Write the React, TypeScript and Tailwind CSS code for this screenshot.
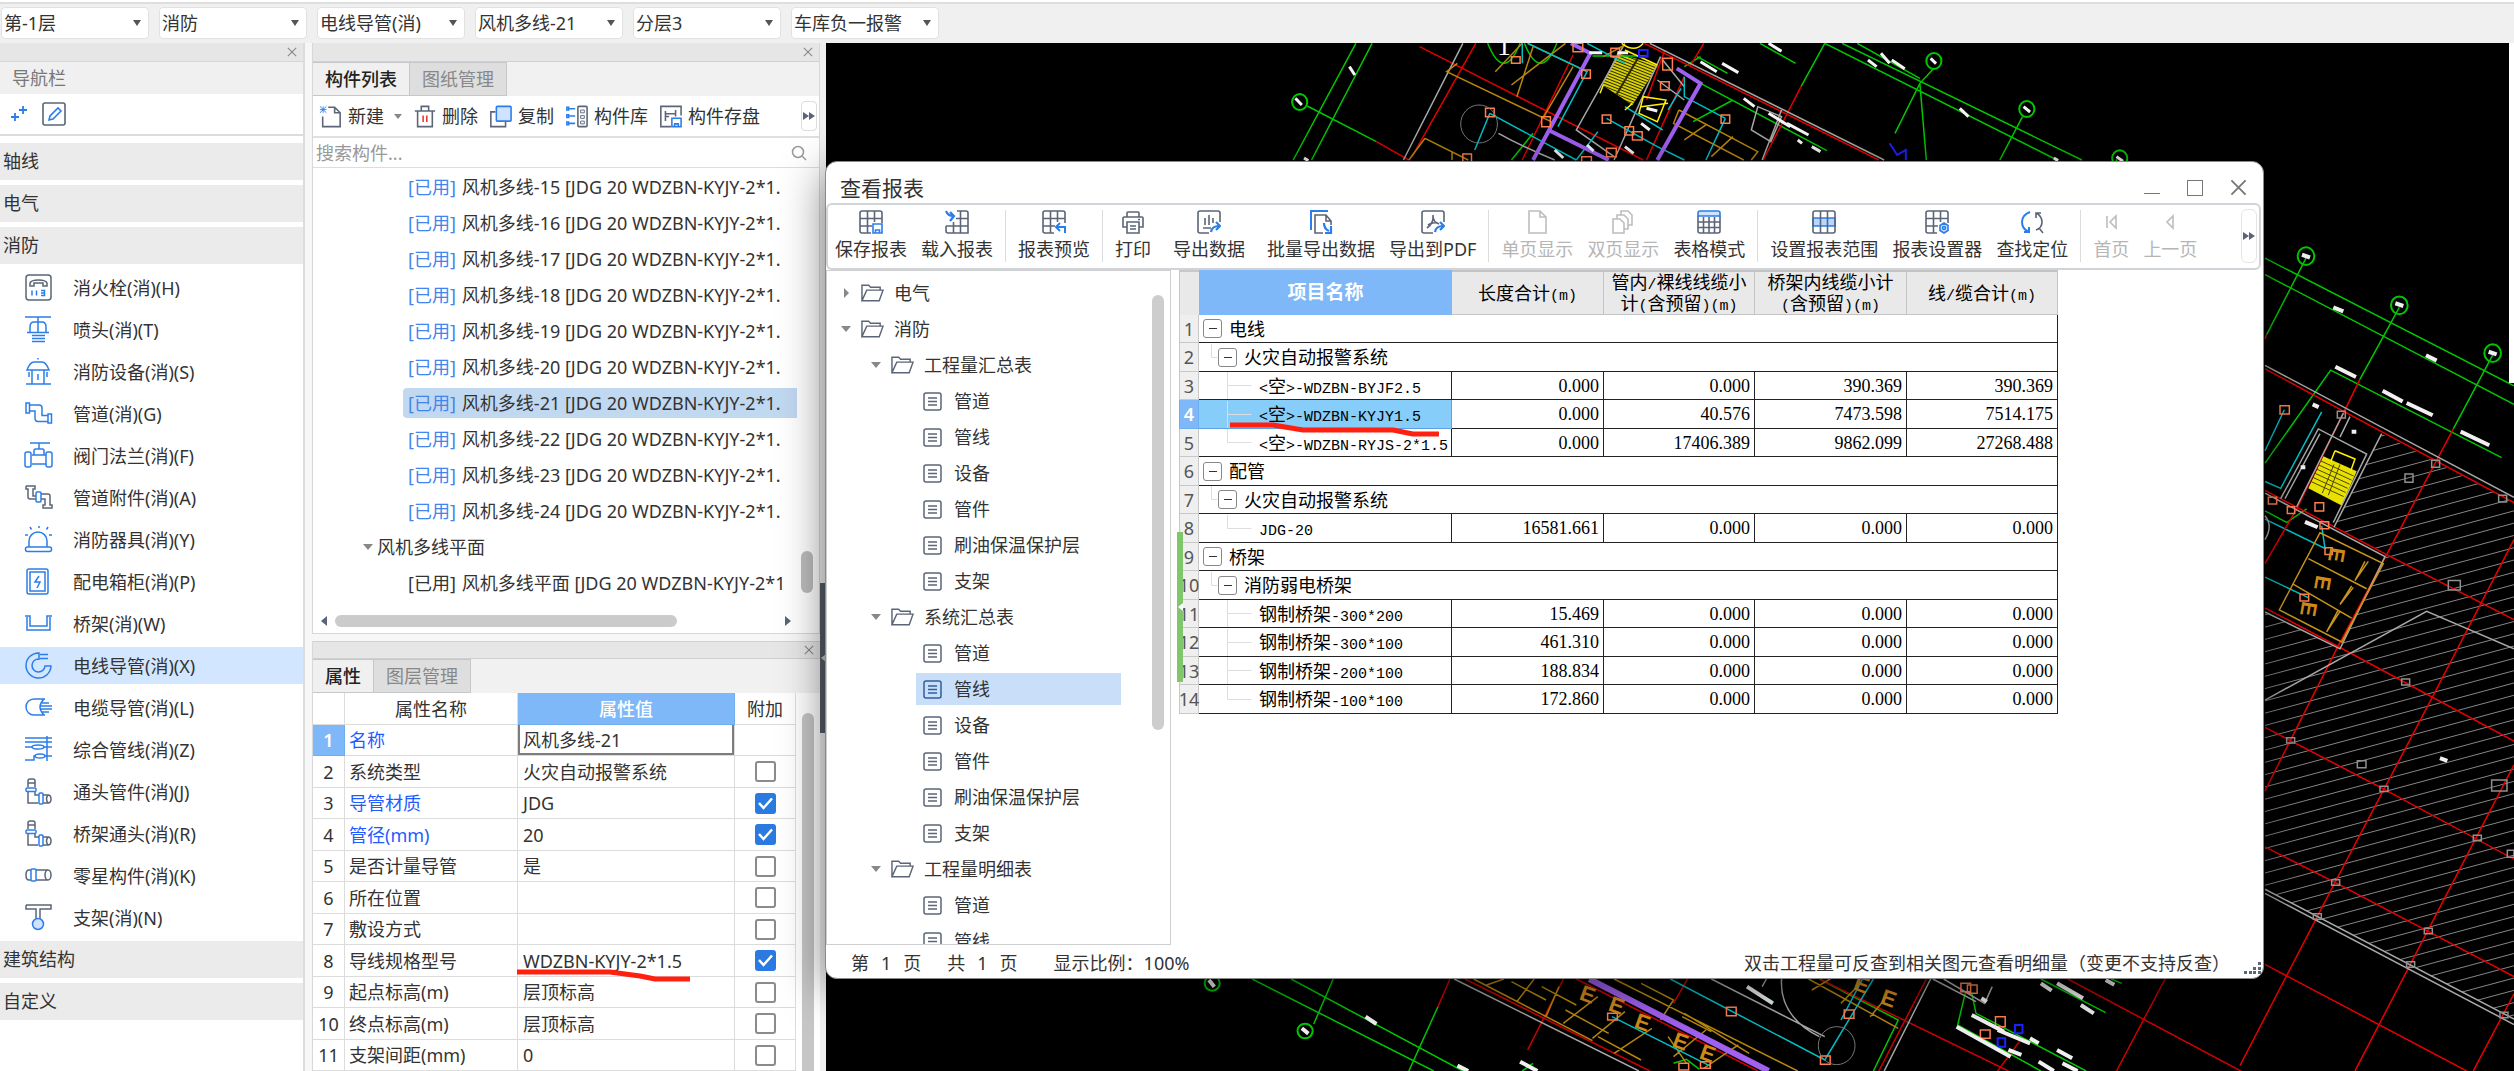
import React from "react";

const BLUE = "#2b7de9";
const GRAY = "#5b6577";

const filters = ["第-1层", "消防", "电线导管(消)", "风机多线-21", "分层3", "车库负一报警"];

const Phone = () => (
  <>
    <rect x="1" y="1" width="25" height="25" rx="3" stroke={GRAY} />
    <path d="M5 12V9q1-3 8.500-3t8.500 3v3h-4v-3h-9v3z" stroke={GRAY} />
    <path d="M7 16.500v5M11.500 16.500v5M16 16.500h3.500v5H16M16 19h3.500v-2.500" />
  </>
);
const Elbow = () => (
  <>
    <path d="M3 9V3q0-2 2-2h3q2 0 2 2v6M3 5h7M3 14v11h10M10 14v3h4M18 17h5q3 0 3 4t-3 4h-5M23 17q-3 4 0 8" stroke={GRAY} />
    <rect x="1" y="10" width="10" height="3.500" rx="1" />
    <rect x="14" y="15" width="4" height="11" rx="1" />
  </>
);

const navItems = [
  { label: "消火栓(消)(H)", icon: <Phone /> },
  {
    label: "喷头(消)(T)",
    icon: <path d="M0 1h26M13 1v15M5 16v-5q0-5 4-5h8q4 0 4 5v5M2 16.500h22M7 19.500h13M7 22.500h13M7 25.500h13" />,
  },
  {
    label: "消防设备(消)(S)",
    icon: <path d="M13 0v1.500M2 12q3-8 7-8h8q4 0 7 8zM7 12v14M19 12v14M13 16v6M4 14v5M22 14v5M1 26h25" />,
  },
  {
    label: "管道(消)(G)",
    icon: <path d="M1 3h3.500v10H1zM23 14h3.500v9H23zM4.500 5H14q3 0 3 3v7.500h6M4.500 11H10v7q0 3.500 3 3.500h10" />,
  },
  {
    label: "阀门法兰(消)(F)",
    icon: (
      <>
        <path d="M5 1h20M14 1v6M9 13V8.500Q9 7 10.500 7h7Q19 7 19 8.500V13M7 13h14M7 22h14" />
        <rect x="0" y="10" width="6" height="15" rx="2" />
        <rect x="21" y="10" width="6" height="15" rx="2" />
      </>
    ),
  },
  {
    label: "管道附件(消)(A)",
    icon: (
      <>
        <path d="M1 2h9v3H8v7h3M1 2v3h2v8q0 2 2 2h6M16 10h7q2 0 2 2v9h2v3h-9v-3h2v-6h-4" stroke={GRAY} />
        <rect x="11" y="8" width="5" height="10" rx="1" />
      </>
    ),
  },
  {
    label: "消防器具(消)(Y)",
    icon: (
      <>
        <rect x="0.500" y="21" width="26" height="4.500" rx="2" />
        <path d="M4 21v-6a9 9 0 0 1 18 0v6M14 0v2M5 1l1.500 2.500M23 1l-1.500 2.500M0 9h3M24 9h3" />
      </>
    ),
  },
  {
    label: "配电箱柜(消)(P)",
    icon: (
      <>
        <rect x="2" y="1" width="21" height="25" rx="2" />
        <rect x="5" y="4" width="15" height="19" />
        <path d="M14 8l-4 6h5l-3 6" />
      </>
    ),
  },
  { label: "桥架(消)(W)", icon: <path d="M0 6h5v10h17V6h5M2 7v13h23V7" /> },
  {
    label: "电线导管(消)(X)",
    icon: <path d="M14 1A12.500 12.500 0 1 0 26 14h-6a6.500 6.500 0 1 1-6-7zM14 1v7M15 2.500h8M15 6.500h8" />,
    active: true,
  },
  {
    label: "电缆导管(消)(L)",
    icon: <path d="M20 5H9a8 8 0 0 0 0 16h11M19 5q-8 8 0 16M17 9h7M15 12h12M15 15h12M17 18h7" />,
  },
  {
    label: "综合管线(消)(Z)",
    icon: (
      <>
        <path d="M0 2h27M0 6h27M0 11h27M22 0v25M0 24h9v-4h18" />
        <ellipse cx="13" cy="11" rx="6" ry="2" fill="white" />
        <ellipse cx="15" cy="20" rx="5" ry="2" fill="white" />
      </>
    ),
  },
  { label: "通头管件(消)(J)", icon: <Elbow /> },
  { label: "桥架通头(消)(R)", icon: <Elbow /> },
  {
    label: "零星构件(消)(K)",
    icon: (
      <>
        <path d="M6 8H4q-3 0-3 5t3 5h2M11 8h12a3 5 0 0 1 0 10H11M23 8a3 5 0 0 0 0 10" stroke={GRAY} />
        <rect x="6" y="7" width="5" height="12" rx="1" />
      </>
    ),
  },
  {
    label: "支架(消)(N)",
    icon: (
      <>
        <path d="M1 1h25v4H15v10M1 1v4h10v10" stroke={GRAY} />
        <circle cx="13" cy="20" r="5.500" fill="#cfe2ff" />
      </>
    ),
  },
];

const components = ["15", "16", "17", "18", "19", "20", "21", "22", "23", "24"];

type Prop = { name: string; value: string; blue?: boolean; checked?: boolean };
const properties: Prop[] = [
  { name: "名称", value: "风机多线-21", blue: true },
  { name: "系统类型", value: "火灾自动报警系统" },
  { name: "导管材质", value: "JDG", blue: true, checked: true },
  { name: "管径(mm)", value: "20", blue: true, checked: true },
  { name: "是否计量导管", value: "是" },
  { name: "所在位置", value: "" },
  { name: "敷设方式", value: "" },
  { name: "导线规格型号", value: "WDZBN-KYJY-2*1.5", checked: true },
  { name: "起点标高(m)", value: "层顶标高" },
  { name: "终点标高(m)", value: "层顶标高" },
  { name: "支架间距(mm)", value: "0" },
];

const leaves = ["管道", "管线", "设备", "管件", "刷油保温保护层", "支架"];
type Node = { level: number; label: string; open?: boolean; active?: boolean };
const tree: Node[] = [
  { level: 0, label: "电气", open: false },
  { level: 0, label: "消防", open: true },
  { level: 1, label: "工程量汇总表", open: true },
  ...leaves.map((label) => ({ level: 2, label })),
  { level: 1, label: "系统汇总表", open: true },
  ...leaves.map((label) => ({ level: 2, label, active: label === "管线" })),
  { level: 1, label: "工程量明细表", open: true },
  { level: 2, label: "管道" },
  { level: 2, label: "管线" },
];

type Row = { level: number; name: string; values?: string[]; last?: boolean; active?: boolean };
const report: Row[] = [
  { level: 0, name: "电线" },
  { level: 1, name: "火灾自动报警系统" },
  { level: 2, name: "<空>-WDZBN-BYJF2.5", values: ["0.000", "0.000", "390.369", "390.369"] },
  { level: 2, name: "<空>-WDZBN-KYJY1.5", values: ["0.000", "40.576", "7473.598", "7514.175"], active: true },
  { level: 2, name: "<空>-WDZBN-RYJS-2*1.5", values: ["0.000", "17406.389", "9862.099", "27268.488"], last: true },
  { level: 0, name: "配管" },
  { level: 1, name: "火灾自动报警系统" },
  { level: 2, name: "JDG-20", values: ["16581.661", "0.000", "0.000", "0.000"], last: true },
  { level: 0, name: "桥架" },
  { level: 1, name: "消防弱电桥架" },
  { level: 2, name: "钢制桥架-300*200", values: ["15.469", "0.000", "0.000", "0.000"] },
  { level: 2, name: "钢制桥架-300*100", values: ["461.310", "0.000", "0.000", "0.000"] },
  { level: 2, name: "钢制桥架-200*100", values: ["188.834", "0.000", "0.000", "0.000"] },
  { level: 2, name: "钢制桥架-100*100", values: ["172.860", "0.000", "0.000", "0.000"], last: true },
];

// half width characters are set in a mono face, half as wide as the Chinese ones
const Mixed = ({ text }: { text: string }) => (
  <>
    {text.split(/([\x20-\x7e]+)/).map((part, i) =>
      i % 2 ? (
        <span key={i} className="font-['Liberation_Mono',monospace] text-[15px] leading-none">
          {part}
        </span>
      ) : (
        part
      )
    )}
  </>
);

const Close = ({ className }: { className: string }) => (
  <svg viewBox="0 0 12 12" className={className} fill="none" stroke="currentColor" strokeWidth="1.300">
    <path d="M1 1l10 10M11 1L1 11" />
  </svg>
);

const Forward = () => (
  <svg viewBox="0 0 12 8" className="h-2 w-3" fill={GRAY}>
    <path d="M0 0l6 4-6 4zM6 0l6 4-6 4z" />
  </svg>
);

const TopBar = () => (
  <header className="flex h-[43px] shrink-0 gap-2.5 border-t-2 border-white bg-[#f0f0f0] px-px pt-[5px] shadow-[inset_0_2px_0_#dedede]">
    {filters.map((item) => (
      <div key={item} className="relative h-8 w-37">
        <select
          aria-label={item}
          className="h-8 w-full appearance-none rounded-sm border border-[#e2e2e2] bg-white pl-0.5 text-lg leading-7 text-[#333] outline-none"
        >
          <option>{item}</option>
        </select>
        <svg viewBox="0 0 8 6" className="pointer-events-none absolute top-[13px] right-2 h-1.5 w-2" fill="#555">
          <path d="M0 0h8L4 6z" />
        </svg>
      </div>
    ))}
  </header>
);

const Category = ({ label }: { label: string }) => (
  <button className="mb-[5px] block h-[37px] w-full bg-[#ebebeb] pl-[3px] text-left text-lg leading-[37px]">{label}</button>
);

const Navigator = () => (
  <nav className="w-[305px] shrink-0 border-r-2 border-[#dcdcdc] bg-white">
    <div className="flex h-[19px] items-center justify-end border-b border-[#d6d6d6] bg-[#e6e6e6] pr-1.5">
      <button aria-label="关闭导航栏" className="text-[#888]">
        <Close className="size-2.5" />
      </button>
    </div>
    <h2 className="h-8 bg-[#f0f0f0] pl-3 text-lg leading-8 text-[#777]">导航栏</h2>
    <div className="flex h-[42px] items-center gap-3.5 border-b-2 border-[#dcdcdc] pl-2.5">
      <button aria-label="新建">
        <svg viewBox="0 0 18 20" className="h-5 w-[18px]" fill="none" stroke={BLUE} strokeWidth="1.800">
          <path d="M1 13h8M5 9v8M9 6h8M13 2v8" />
        </svg>
      </button>
      <button aria-label="编辑">
        <svg viewBox="0 0 24 24" className="size-6" fill="none" stroke={GRAY} strokeWidth="1.600">
          <rect x="1" y="1" width="22" height="22" rx="2" />
          <path d="M7 18l1-4 8-8 3 3-8 8z" stroke={BLUE} />
        </svg>
      </button>
    </div>
    <div className="pt-[7px]">
      <Category label="轴线" />
      <Category label="电气" />
      <Category label="消防" />
    </div>
    <ul>
      {navItems.map((item) => (
        <li key={item.label} className="h-[42px]">
          <button
            className={`flex h-[37px] w-full items-center gap-5 pl-6 text-lg ${item.active ? "bg-[#d2e7ff]" : ""}`}
          >
            <svg viewBox="-1 -1 29 29" className="size-[29px]" fill="none" stroke={BLUE} strokeWidth="1.500">
              {item.icon}
            </svg>
            <span>{item.label}</span>
          </button>
        </li>
      ))}
    </ul>
    <Category label="建筑结构" />
    <Category label="自定义" />
  </nav>
);

const Tabs = ({ items }: { items: string[] }) => (
  <div className="flex h-[34px] shrink-0 bg-[#f1f1f1]">
    {items.map((item, i) => (
      <button
        key={item}
        className={`border border-l-0 border-[#c4c8cd] px-3 text-lg leading-8 ${
          i === 0 ? "bg-[#f0f0f0] font-medium text-[#222]" : "bg-[#dedede] text-[#888]"
        }`}
      >
        {item}
      </button>
    ))}
  </div>
);

const tools = [
  {
    label: "新建",
    icon: (
      <>
        <path d="M9 2h7l6 6v15H3V12M16 2v6h6" />
        <path d="M0 1l7 7M7 1L0 8M0 4.500h7M3.500 1v7" stroke={BLUE} strokeWidth="1" />
      </>
    ),
  },
  {
    label: "删除",
    icon: (
      <>
        <path d="M1 6h22M4 6v17h16V6M8 6V1h8v5" />
        <path d="M10 11v7M14 11v7" stroke="#e33" />
      </>
    ),
  },
  {
    label: "复制",
    icon: (
      <>
        <path d="M6 7H1v16h16v-5" />
        <rect x="7" y="1" width="16" height="16" rx="1" stroke={BLUE} fill="#cfe2ff" />
      </>
    ),
  },
  {
    label: "构件库",
    icon: (
      <>
        <rect x="13" y="1" width="10" height="22" rx="1" />
        <path d="M16 5h4v3h-4zM16 11h4v3h-4zM16 17h4v3h-4z" strokeWidth="1" />
        <path d="M1 2h2v3H1zM1 10h2v3H1zM1 18h2v3H1zM4 3.500h6M4 11.500h6M4 19.500h6" stroke={BLUE} />
      </>
    ),
  },
  {
    label: "构件存盘",
    icon: (
      <>
        <path d="M12 23H1V1h22v10M6 6v11M6 9h11v3M17 5v4M6 12h4" />
        <path d="M13 14h10v9H13zM16 23v-3h4v3" stroke={BLUE} />
      </>
    ),
  },
];

const ComponentPanel = () => (
  <section className="flex h-[591px] shrink-0 flex-col border-x border-b border-[#d8d8d8] bg-white">
    <div className="flex h-[19px] shrink-0 items-center justify-end border-b border-[#d0d0d0] bg-[#e6e6e6] pr-1.5">
      <button aria-label="关闭构件列表" className="text-[#888]">
        <Close className="size-2.5" />
      </button>
    </div>
    <Tabs items={["构件列表", "图纸管理"]} />
    <div className="flex h-[42px] shrink-0 items-center gap-[11px] border-b-2 border-[#e0e0e0] pl-1.5">
      {tools.map((tool) => (
        <button key={tool.label} className="flex items-center gap-1.5 text-lg whitespace-nowrap">
          <svg viewBox="-1 0 25 24" className="size-[23px]" fill="none" stroke={GRAY} strokeWidth="1.700">
            {tool.icon}
          </svg>
          {tool.label}
          {tool.label === "新建" && (
            <svg viewBox="0 0 8 5" className="ml-1 h-[5px] w-2" fill="#888">
              <path d="M0 0h8L4 5z" />
            </svg>
          )}
        </button>
      ))}
      <button aria-label="更多" className="mr-0.5 ml-auto rounded border border-[#ddd] px-px py-2.5">
        <Forward />
      </button>
    </div>
    <div className="flex h-[30px] shrink-0 items-center border-b border-[#ddd] pr-3 pl-[3px]">
      <input
        aria-label="搜索构件"
        placeholder="搜索构件..."
        className="h-7 min-w-0 flex-1 text-lg outline-none placeholder:text-[#999]"
      />
      <svg viewBox="0 0 16 16" className="size-4" fill="none" stroke="#999" strokeWidth="1.500">
        <circle cx="7" cy="7" r="5.500" />
        <path d="M11 11l4 4" />
      </svg>
    </div>
    <div className="flex min-h-0 flex-1">
      <ul className="min-w-0 flex-1 pt-1 text-lg whitespace-nowrap">
        {components.map((no) => (
          <li
            key={no}
            className={`mb-1.5 ml-[90px] h-[30px] rounded-l-sm pl-[5px] leading-[30px] ${no === "21" ? "bg-[#c1d8f1]" : ""}`}
          >
            <span className="mr-1.5 text-[#4285ee]">[已用]</span>风机多线-{no} [JDG 20 WDZBN-KYJY-2*1.
          </li>
        ))}
        <li className="mb-1.5 flex h-[30px] items-center gap-1 pl-[50px]">
          <svg viewBox="0 0 10 6" className="h-1.5 w-2.5" fill="#888">
            <path d="M0 0h10L5 6z" />
          </svg>
          风机多线平面
        </li>
        <li className="h-[30px] pl-[95px] leading-[30px]">
          <span className="mr-1.5">[已用]</span>风机多线平面 [JDG 20 WDZBN-KYJY-2*1
        </li>
      </ul>
      <div className="flex w-[22px] flex-col justify-end pb-4 pl-1">
        <div className="h-[42px] w-3 rounded-full bg-[#bdbdbd]" />
      </div>
    </div>
    <div className="flex h-6 shrink-0 items-center gap-2 px-2 pr-7">
      <svg viewBox="0 0 6 10" className="h-2.5 w-1.5" fill={GRAY}>
        <path d="M6 0v10L0 5z" />
      </svg>
      <div className="flex-1">
        <div className="h-3 w-[342px] rounded-full bg-[#cbcbcb]" />
      </div>
      <svg viewBox="0 0 6 10" className="h-2.5 w-1.5" fill={GRAY}>
        <path d="M0 0v10l6-5z" />
      </svg>
    </div>
  </section>
);

const PropertyPanel = () => (
  <section className="mt-[7px] min-h-0 flex-1 border-l border-[#d8d8d8] bg-white">
    <div className="flex h-[18px] items-center justify-end border-t border-b border-[#d0d0d0] bg-[#e6e6e6] pr-1.5">
      <button aria-label="关闭属性" className="text-[#888]">
        <Close className="size-2.5" />
      </button>
    </div>
    <Tabs items={["属性", "图层管理"]} />
    <div className="flex items-start">
      <table className="w-[483px] table-fixed border-separate border-spacing-0 text-lg">
        <colgroup>
          <col className="w-8" />
          <col className="w-[173px]" />
          <col className="w-[217px]" />
          <col className="w-[61px]" />
        </colgroup>
        <thead>
          <tr className="h-8">
            <th className="border-r border-b border-[#dcdcdc]" />
            <th className="border-r border-b border-[#dcdcdc] p-0 font-normal">属性名称</th>
            <th className="border-r border-b border-[#6faeee] bg-[#7fb8f8] p-0 font-medium text-white">属性值</th>
            <th className="border-r border-b border-[#dcdcdc] p-0 font-normal">附加</th>
          </tr>
        </thead>
        <tbody>
          {properties.map((p, i) => (
            <tr key={p.name} className="odd:h-[31px] even:h-8">
              <td
                className={`border-r border-b p-0 text-center leading-6 ${
                  i === 0 ? "border-[#6faeee] bg-[#7fb8f8] font-semibold text-white" : "border-[#dcdcdc]"
                }`}
              >
                {i + 1}
              </td>
              <td className={`border-r border-b border-[#dcdcdc] p-0 pl-1 leading-6 ${p.blue ? "text-[#1f5cff]" : ""}`}>
                {p.name}
              </td>
              <td className="border-r border-b border-[#dcdcdc] p-0 leading-6">
                {i === 0 ? (
                  <input
                    aria-label={p.name}
                    defaultValue={p.value}
                    className="block h-[30px] w-full border-2 border-t-0 border-[#7d7d7d] pl-[3px] outline-none"
                  />
                ) : (
                  <span className="pl-[5px]">{p.value}</span>
                )}
              </td>
              <td className="border-r border-b border-[#dcdcdc] p-0">
                {i > 0 && (
                  <label className="relative mx-auto block size-[21px]">
                    <input
                      type="checkbox"
                      aria-label={p.name}
                      defaultChecked={p.checked}
                      className="peer block size-[21px] appearance-none rounded-[3px] border-2 border-[#8b8b8b] bg-white checked:border-[#2a7ae2] checked:bg-[#2a7ae2]"
                    />
                    <svg
                      viewBox="0 0 21 21"
                      className="pointer-events-none absolute inset-0 hidden peer-checked:block"
                      fill="none"
                      stroke="white"
                      strokeWidth="2.500"
                    >
                      <path d="M4 10l4.500 5L17 5.500" />
                    </svg>
                  </label>
                )}
              </td>
            </tr>
          ))}
        </tbody>
      </table>
      <div className="mt-5 ml-1.5 h-[400px] w-3 rounded-full bg-[#c6c6c6]" />
    </div>
  </section>
);

const TableGrid = () => <path d="M12 23H3q-2 0-2-2V3q0-2 2-2h18q2 0 2 2v10M1 8.500h22M1 16h12M8.500 1v22M15.500 1v11" />;

type Action = { label: string; icon: React.ReactNode; wide?: boolean; disabled?: boolean; sep?: boolean };
const actions: Action[] = [
  {
    label: "保存报表",
    icon: (
      <>
        <TableGrid />
        <path d="M14 14h9v9h-9zM16.500 23v-3h4v3" stroke={BLUE} />
      </>
    ),
  },
  {
    label: "载入报表",
    sep: true,
    icon: (
      <>
        <path d="M12 1h9q2 0 2 2v20H3q-2 0-2-2v-5M1 16h22M11 8.500h12M8.500 12v11M15.500 1v22" />
        <path d="M1 1q2 5 7 5M5 2l4 4-4 5" stroke={BLUE} strokeWidth="2.200" />
      </>
    ),
  },
  {
    label: "报表预览",
    sep: true,
    icon: (
      <>
        <TableGrid />
        <path d="M23 23v-6h-8M18 13l-4 4 4 4" stroke={BLUE} strokeWidth="2" />
      </>
    ),
  },
  {
    label: "打印",
    icon: <path d="M6 7V3q0-1 1-1h10q1 0 1 1v4M6 17H2V8q0-1 1-1h18q1 0 1 1v9h-4M6 12h12v11H6zM9 16h6M9 19h6M17 9.500h2" />,
  },
  {
    label: "导出数据",
    wide: true,
    icon: (
      <>
        <path d="M12 23H3q-2 0-2-2V3q0-2 2-2h18q2 0 2 2v9M6 18h8M8 8v7M12 5v10M16 8v5" />
        <path d="M14 22q1-6 8-6M19 12l4 4-4 4" stroke={BLUE} strokeWidth="2.200" />
      </>
    ),
  },
  {
    label: "批量导出数据",
    icon: (
      <>
        <path d="M2 20V1h17" stroke={BLUE} strokeWidth="2" />
        <path d="M14 23H6V5h11l5 6v4M17 5v6h5" />
        <path d="M15 13q0 6 5 8M22 16v7h-6" stroke={BLUE} strokeWidth="2.200" />
      </>
    ),
  },
  {
    label: "导出到PDF",
    sep: true,
    icon: (
      <>
        <path d="M12 23H3q-2 0-2-2V3q0-2 2-2h18q2 0 2 2v9M12 5q1 8-6 13M12 6q0 6 6 8M7 15q4-3 10-2" />
        <path d="M14 22q1-6 8-6M19 12l4 4-4 4" stroke={BLUE} strokeWidth="2.200" />
      </>
    ),
  },
  { label: "单页显示", disabled: true, icon: <path d="M4 1h11l6 6v16H4zM15 1v6h6" /> },
  { label: "双页显示", disabled: true, icon: <path d="M2 9h7l4 4v10H2zM6 9V5h7l4 4v10h-4M10 5V1h7l4 4v10h-4" /> },
  {
    label: "表格模式",
    sep: true,
    icon: (
      <>
        <path d="M1 6v15q0 2 2 2h18q2 0 2-2V6M1 12h22M1 17.500h22M6.500 7v16M12 7v16M17.500 7v16" />
        <path d="M1 6V3q0-2 2-2h18q2 0 2 2v3z" stroke={BLUE} fill="#cfe2ff" />
      </>
    ),
  },
  {
    label: "设置报表范围",
    icon: (
      <>
        <path d="M1 8h22v8H1z" fill="#b9d6ff" stroke={BLUE} />
        <rect x="1" y="1" width="22" height="22" rx="2" />
        <path d="M8.500 1v22M15.500 1v22" />
      </>
    ),
  },
  {
    label: "报表设置器",
    icon: (
      <>
        <TableGrid />
        <path d="M19 13l4 2.500v5L19 23l-4-2.500v-5z" stroke={BLUE} fill="#cfe2ff" />
        <circle cx="19" cy="18" r="1.500" stroke={BLUE} />
      </>
    ),
  },
  {
    label: "查找定位",
    sep: true,
    icon: (
      <>
        <path d="M10 2Q2 5 2 12t7 10M4 22h5v-5" stroke={BLUE} strokeWidth="2" />
        <path d="M16 3q6 3 6 9t-6 8M16 8V3h5M19 18l4 5" />
      </>
    ),
  },
  { label: "首页", disabled: true, icon: <path d="M8 6v12M17 6v12l-6-6z" /> },
  { label: "上一页", disabled: true, icon: <path d="M15 6v12l-6-6z" /> },
];

const ReportTree = () => (
  <div className="flex w-[345px] shrink-0 overflow-hidden border border-[#cfcfcf] pt-1">
    <ul className="flex-1 text-lg">
      {tree.map((node, i) => (
        <li key={i} className="h-9 py-0.5">
          {node.level === 2 ? (
            <button
              className={`ml-[89px] flex h-8 w-[205px] items-center gap-3 pl-[7px] ${node.active ? "bg-[#c9dff9]" : ""}`}
            >
              <svg viewBox="0 0 19 19" className="size-[19px]" fill="none" stroke={node.active ? "#2f5f9f" : GRAY} strokeWidth="1.500">
                <rect x="1" y="1" width="17" height="17" rx="2" />
                <path d="M5 6h9M5 9.500h9M5 13h9" />
              </svg>
              {node.label}
            </button>
          ) : (
            <button className={`flex h-8 items-center gap-2.5 ${node.level === 0 ? "pl-3.5" : "pl-11"}`}>
              <svg viewBox="0 0 10 10" className="size-2.5" fill="#888">
                <path d={node.open ? "M0 2h10L5 8z" : "M3 0l5 5-5 5z"} />
              </svg>
              <svg viewBox="0 0 24 18" className="h-[18px] w-[23px]" fill="none" stroke={GRAY} strokeWidth="1.500">
                <path d="M1 17V1h7l2 2h10v3M1 17L6 6h17l-4 11z" />
              </svg>
              {node.label}
            </button>
          )}
        </li>
      ))}
    </ul>
    <div className="mt-5 mr-1.5 h-[435px] w-3 rounded-full bg-[#cdcdcd]" />
  </div>
);

const Toggle = ({ name }: { name: string }) => (
  <button
    aria-label={`折叠 ${name}`}
    className="flex size-[19px] items-center justify-center rounded-[3px] border border-[#888] bg-white"
  >
    <span className="h-px w-2 bg-[#333]" />
  </button>
);

const ReportTable = () => (
  <div className="relative ml-2 text-lg text-black">
    <table className="w-[879px] table-fixed border-separate border-spacing-0">
      <colgroup>
        <col className="w-5" />
        <col className="w-[253px]" />
        <col className="w-[152px]" />
        <col className="w-[151px]" />
        <col className="w-[152px]" />
        <col className="w-[151px]" />
      </colgroup>
      <thead>
        <tr className="h-[45px] bg-[#e9e9e9] leading-[21px]">
          <th className="border-t-2 border-l border-[#c8c8c8] p-0" />
          <th className="bg-[#7fb8f8] p-0 text-[19px] font-bold text-white">项目名称</th>
          {["长度合计(m)", "管内/裸线线缆小计(含预留)(m)", "桥架内线缆小计(含预留)(m)", "线/缆合计(m)"].map((head) => (
            <th key={head} className="border-t-2 border-r border-b border-[#c4c4c4] px-1.5 py-0 font-normal">
              <Mixed text={head} />
            </th>
          ))}
        </tr>
      </thead>
      <tbody>
        {report.map((row, i) => (
          <tr key={i} className="odd:h-7 even:h-[29px]">
            <td
              className={`border-r border-b border-l p-0 text-center leading-6 ${
                row.active ? "border-[#6faeee] bg-[#7fb8f8] font-semibold text-white" : "border-[#c8c8c8] bg-[#efefef] text-[#555]"
              }`}
            >
              <span className="-mx-1">{i + 1}</span>
            </td>
            <td
              colSpan={row.values ? 1 : 5}
              className={`border-r border-b p-0 leading-6 ${
                row.active ? "border-[#5f9fe6] bg-[#87cdf9]" : "border-[#222]"
              }`}
            >
              <div className="flex h-[27px] items-center whitespace-nowrap">
                {row.level === 0 && <div className="w-1" />}
                {row.level === 1 && (
                  <svg viewBox="0 0 19 27" className="h-[27px] w-[19px]" stroke="#ddd">
                    <path d="M12.500 0v13.500h6" fill="none" />
                  </svg>
                )}
                {row.level === 2 ? (
                  <svg viewBox="0 0 60 27" className="h-[27px] w-[60px]" stroke="#ddd" fill="none">
                    <path d={row.last ? "M28.500 0v13.500h24" : "M28.500 0v27M28.500 13.500h24"} />
                  </svg>
                ) : (
                  <Toggle name={row.name} />
                )}
                <span className={row.level < 2 ? "pl-[7px]" : ""}>
                  <Mixed text={row.name} />
                </span>
              </div>
            </td>
            {row.values?.map((value, n) => (
              <td
                key={n}
                className="border-r border-b border-[#222] p-0 pr-1 text-right font-['Liberation_Serif',serif] leading-6"
              >
                {value}
              </td>
            ))}
          </tr>
        ))}
      </tbody>
    </table>
    <svg viewBox="0 0 220 20" className="absolute top-[152px] left-[48px] h-5 w-[220px]" fill="none" stroke="#ff2010" strokeWidth="5">
      <path d="M3 3h43l30 5h90l20 4h26" strokeLinejoin="round" />
    </svg>
    <svg viewBox="0 0 6 150" className="absolute top-[262px] -left-0.5 h-[150px] w-1.5">
      <path d="M0 0h6v150H0z" fill="#82c66c" />
      <path d="M6 71v8l-5-4z" fill="white" />
    </svg>
  </div>
);

const ReportDialog = () => (
  <div
    role="dialog"
    aria-label="查看报表"
    className="absolute top-[118px] right-[250px] bottom-[92px] -left-px flex flex-col rounded-xl border border-[#8a8a8a] bg-white shadow-[0_10px_44px_rgba(0,0,0,0.5)]"
  >
    <div className="flex h-[41px] shrink-0 items-center gap-[27px] pt-2.5 pr-4 pl-3.5 text-[#777]">
      <h1 className="flex-1 text-[21px] leading-8 text-[#333]">查看报表</h1>
      <button aria-label="最小化" className="flex h-4 w-4 items-end">
        <span className="mb-0.5 h-px w-4 bg-[#777]" />
      </button>
      <button aria-label="最大化" className="size-4 border border-[#777]" />
      <button aria-label="关闭">
        <Close className="size-[17px]" />
      </button>
    </div>
    <div className="mr-0.5 flex h-[67px] shrink-0 items-center rounded-md border-2 border-[#d0d4d8] pb-0.5 text-lg">
      {actions.map((action) => (
        <React.Fragment key={action.label}>
          <button
            disabled={action.disabled}
            className={`flex shrink-0 flex-col items-center gap-[3px] leading-6 ${action.wide ? "px-[15px]" : "px-[7px]"} ${
              action.disabled ? "text-[#b5b5b5]" : ""
            }`}
          >
            <svg
              viewBox="0 0 24 24"
              className="size-6"
              fill="none"
              stroke={action.disabled ? "#bdbdbd" : GRAY}
              strokeWidth="1.600"
            >
              {action.icon}
            </svg>
            {action.label}
          </button>
          {action.sep && <div className="mx-[5px] h-[52px] w-px shrink-0 bg-[#dcdcdc]" />}
        </React.Fragment>
      ))}
      <button aria-label="更多" className="mr-0.5 ml-auto rounded-md border border-[#e4e4e4] px-px py-[22px]">
        <Forward />
      </button>
    </div>
    <div className="flex min-h-0 flex-1">
      <ReportTree />
      <ReportTable />
    </div>
    <footer className="flex h-[33px] shrink-0 items-center pt-0.5 pr-0.5 pl-[25px] text-lg">
      <span className="mr-[26px] flex gap-3">
        <span>第</span>
        <span>1</span>
        <span>页</span>
      </span>
      <span className="mr-9 flex gap-3">
        <span>共</span>
        <span>1</span>
        <span>页</span>
      </span>
      <span className="flex-1">显示比例：100%</span>
      <span>双击工程量可反查到相关图元查看明细量（变更不支持反查）</span>
      <svg viewBox="0 0 17 17" className="mt-2 ml-3.5 size-[17px]" fill={GRAY}>
        <path d="M0 13h3v3H0zM5 13h3v3H5zM9 13h3v3H9zM14 13h3v3h-3zM9 9h3v3H9zM14 9h3v3h-3zM14 4h3v3h-3z" />
      </svg>
    </footer>
  </div>
);

type Stroke = [color: string, d: string, width?: number];

const topStrokes: Stroke[] = [
  ["#00c800", "M496 130L438 480M511 130L455 480M451 318L515 425M930 130L1145 480M946 130L1168 480M960 130L1018 235M930 130L908 260M1031 205L1018 250L995 400M1018 250L1024 480M1113 350L1092 480M1200 478V485M870 130L903 190M815 170L800 200M812 170L840 220M812 245L932 452M845 300L808 365M715 168H765M618 130q15 120 30 0M652 130q15 120 30 0M660 400L640 480"],
  ["#e00000", "M555 140L762 480M607 130L548 470M515 425L545 480M763 130L980 480M818 130L805 200M908 260L873 480M697 165L650 480M800 230L765 480M782 150L765 300"],
  ["#a8a8a8", "M595 130L540 480M768 130L985 480M778 170L735 480M745 130L700 390L735 470M890 330L872 480M862 390L868 320L890 350L880 425ZM628 400Q650 440 680 480M780 180L800 260M775 240L800 300"],
  ["#b8860b", "M590 190L580 215L680 370M655 130L710 215M625 215L650 130M660 140L645 290M640 255L690 130M560 415L545 480M560 415L600 480M585 480V455M697 200L670 350M795 330L868 455L862 480M795 330L790 370L855 480M820 375L800 420M845 410L825 470M725 170L745 135"],
  ["#00c0c8", "M655 130L710 215L683 380M620 340L606 450M620 340L700 480M728 355L775 440L800 480M838 355L800 290V230M838 355L820 480M710 130L745 190M797 265L785 330M650 130V190M720 395L700 480M745 320L780 390"],
  ["#a060f0", "M695 130L713 160L660 480M676 393L730 480M793 205L815 250L775 480", 4],
  ["#ff7f50", "M640 170h8v20h-8zM705 210h8v25h-8zM616 325h8v25h-8zM724 345h8v25h-8zM834 345h8v25h-8zM668 350h8v30h-8zM778 245h8v25h-8zM732 145h8v25h-8zM780 175h9v35h-9zM745 380h8v25h-8zM752 395h9v25h-9zM728 445h9v25h-9zM595 462h8v25h-8zM705 470h9v20h-9zM697 130h9v25h-9z"],
  ["#fff200", "M742 130q12 30 20 0M745 150L775 195M762 290L758 340L775 365L783 300ZM760 320L785 310M725 255L722 280M752 310L745 330"],
  ["#2020ff", "M758 150h8v20h-8zM990 430L997 465L1005 450V480", 2],
  ["#f4f4f4", "M490 200l5 25M440 295l6 20M878 130l12 24M815 185l15 30M835 190l15 28M855 295l10 25M878 340l20 40M895 370l20 35M905 420l4 10M918 440l8 15M982 160l8 30M992 180l12 26M970 180l8 20M1055 325l8 25M1114 320l6 16M1028 175l5 16M680 450l8 24M710 435l6 18M760 370l8 20M745 440l8 20M712 158h12M738 158h10M448 474l4 8M1200 470l6 14M1142 474l4 8M765 325l10 8", 3],
];

const bottomStrokes: Stroke[] = [
  ["#00c800", "M400 177L568 453M436 177L595 453M475 177L457 312M572 260L545 453M660 430L650 453M925 177L998 300L975 453M1060 220L1053 315L1130 453M1066 220L1070 280L1172 453M1130 177L1190 278M1195 177L1205 190M868 220l14 25M790 430l12-12 12 30"],
  ["#d00000", "M583 177L572 260M597 177L768 453M688 177L655 390M700 177L868 453M803 177L790 250M925 177L1100 453M1024 177L980 453M1110 365L1090 453M1155 177L1315 453M1245 177L1200 453"],
  ["#a8a8a8", "M587 177L758 453M1028 177L985 453M825 177L930 350M890 177Q888 290 925 350M876 177L872 200M1040 177L1078 250L1085 200M1030 177L1070 245"],
  ["#b8860b", "M605 177L715 362M633 177L617 195M661 177L645 245M668 200L700 255M640 185L672 240M684 200L672 290M690 270L730 340M720 350L760 420M735 177L905 453M720 230L688 310M745 275L715 355M770 325L735 400M760 190L790 240L778 300M785 350L802 430M800 280L860 400M820 330L790 410M850 375L818 445M915 177L998 325M918 210L935 177M945 250L960 200M972 290L985 240M798 290L825 335"],
  ["#00c0c8", "M787 177L930 420L975 177M733 290L825 440M965 177L945 300"],
  ["#a060f0", "M712 177L878 453", 6],
  ["#ff7f50", "M839 262h9v25h-9zM729 280h9v20h-9zM948 270h9v25h-9zM926 408h9v25h-9zM1088 290h9v30h-9zM1074 330h9v25h-9zM1056 190h9v25h-9zM1062 195h9v25h-9zM795 430h9v20h-9zM815 425h9v20h-9z"],
  ["#2020ff", "M1106 315h7v25h-7zM1090 355h7v25h-7z", 2],
  ["#f0f0f0", "M505 290l10 22M590 437l10 16M648 425l16 28M858 200l24 50M1130 190l10 22M1145 190l24 45M1167 255l12 25M1190 180l8 14M1066 285l30 50M1090 330l30 40M1052 320l50 90M1128 425l14 28M1150 430l14 23M1145 390l14 25M1100 390l12 15M1120 355l8 15M1075 235l5 10M360 180l5 20M446 325l6 16", 4],
];

const rightStrokes: Stroke[] = [
  ["#00c800", "M75 378L822 565M75 402L822 592M198 378L80 490M478 450L360 555M758 520L640 628M75 678L272 542L785 670M75 748L140 765L200 745"],
  ["#00c0c8", "M133 600L75 660M245 603L122 715L75 705M75 760L255 803L245 770M75 845L205 875"],
  ["#e80000", "M80 490L75 496M360 555L170 745L75 825M640 628L440 812L290 950L150 1085L75 1158M822 790L578 1020L285 1292L0 1560M822 1120L563 1363L345 1568M822 1455L700 1568M75 540L310 602L822 736M75 718L440 812L822 907M75 890L300 948L822 1085M75 1065L430 1155L822 1258M75 1240L285 1292L822 1430M75 1412L680 1568"],
  ["#a8a8a8", "M75 535L822 728M75 1302L822 1492M75 1308L822 1500M122 730L235 628L380 665L280 765M135 730L240 635M425 635L282 772M310 605L170 742M330 610L300 640M75 722L435 815L300 950L75 896M75 1025L560 895L822 950M75 790q25-20 0-35"],
  ["#c8961a", "M240 780L430 825L305 940L118 893ZM205 818L380 862M158 855L335 905M385 822L345 850L375 822M340 860L300 885L335 858M300 895L260 925L295 893"],
  ["#ff7f50", "M120 594h28v12h-28zM85 728h25v10h-25zM142 742h22v10h-22zM225 736h26v12h-26zM240 764h26v10h-26zM255 802h22v10h-22zM180 870h26v10h-26z"],
  ["#909090", "M495 694h24v12h-24zM625 850h36v14h-36zM485 994h24v9h-24zM352 1114h26v10h-26zM755 1142h46v16h-46zM802 1245h20v10h-20zM140 1080h24v8h-24zM420 1151h24v8h-24zM275 1288h24v8h-24zM553 1359h24v8h-24zM700 1223h24v8h-24zM575 674h24v10h-24zM776 725h24v10h-24zM292 602h24v10h-24zM220 1338h24v8h-24zM500 1408h24v8h-24zM780 1482h24v8h-24z"],
  ["#f0f0f0", "M286 537l62 15M428 572l60 16M500 590l78 18M662 632l86 20M280 450l30 6M558 520l32 8M186 373l24 4M466 444l24 4M746 515l24 4M218 592l18 4M335 632h14M600 1110l22 4M195 764l38 8M182 684h14", 4],
];

const Strokes = ({ list }: { list: Stroke[] }) => (
  <>
    {list.map(([color, d, width = 1.5], i) => (
      <path key={i} d={d} stroke={color} strokeWidth={width} vectorEffect="non-scaling-stroke" />
    ))}
  </>
);

const Bubbles = ({ at, rx, ry }: { at: number[][]; rx: number; ry: number }) => (
  <>
    {at.map(([cx, cy]) => (
      <ellipse key={cx} cx={cx} cy={cy} rx={rx} ry={ry} stroke="#00c800" strokeWidth="2" vectorEffect="non-scaling-stroke" />
    ))}
  </>
);

// parking bays, each marked with a turned E
const bays = [
  [1588, 994, 20],
  [1617, 1005, 20],
  [1643, 1022, 20],
  [1681, 1041, 20],
  [1708, 1053, 20],
  [1889, 998, 20],
  [1862, 984, 20],
  [2337, 555, 100],
  [2323, 583, 100],
  [2309, 609, 100],
];

const Drawing = () => (
  <svg viewBox="826 43 1688 1028" preserveAspectRatio="xMinYMin slice" className="absolute inset-0 size-full" fill="none">
    <defs>
      <clipPath id="slab">
        <path d="M425 635L822 736V1492L75 1302V896L300 950L440 812L285 770Z" />
      </clipPath>
      <clipPath id="stair">
        <path d="M738 160L776 195L752 315L724 255Z" />
      </clipPath>
    </defs>
    <g transform="translate(820 0) scale(1.0804 0.3333)">
      <path d="M738 160L776 195L752 315L724 255Z" fill="#d8d000" />
      <g clipPath="url(#stair)" stroke="#2a2800">
        {Array.from({ length: 22 }, (_, i) => (
          <path key={i} d={`M715 ${110 + i * 9}l70 90`} vectorEffect="non-scaling-stroke" />
        ))}
        <path d="M757 175l-20 110" strokeWidth="2" vectorEffect="non-scaling-stroke" />
      </g>
      <Strokes list={topStrokes} />
      <Bubbles at={[[444, 306], [1031, 183], [1117, 327], [1203, 475]]} rx={7} ry={24} />
      <ellipse cx="610" cy="372" rx="17" ry="57" stroke="#777" vectorEffect="non-scaling-stroke" />
    </g>
    <text x="1497" y="55" fontSize="28" fill="white" className="font-['Liberation_Serif',serif]">
      1
    </text>
    <g transform="translate(820 920) scale(1.0804 0.3333)">
      <Strokes list={bottomStrokes} />
      <Bubbles at={[[363, 190], [449, 333]]} rx={7} ry={22} />
      <ellipse cx="941" cy="377" rx="17" ry="57" stroke="#777" vectorEffect="non-scaling-stroke" />
    </g>
    <g transform="translate(2240 0) scale(0.3333 0.683)">
      <g clipPath="url(#slab)">
        {Array.from({ length: 60 }, (_, i) => (
          <path
            key={i}
            d={`M0 ${640 + i * 18}L822 ${532 + i * 18}`}
            stroke="#868686"
            strokeWidth="1"
            vectorEffect="non-scaling-stroke"
          />
        ))}
      </g>
      <path d="M250 668L350 690L305 740L205 715Z" fill="#e8e000" />
      <path
        d="M243 675l98 22M237 681l98 22M231 687l98 22M225 693l98 22M219 699l98 22M213 705l98 22M282 680l-35 42M300 680l-35 45"
        stroke="#4a4600"
        strokeWidth="1"
        vectorEffect="non-scaling-stroke"
      />
      <path d="M285 660L345 672L332 690M285 660L272 676" stroke="#fff200" strokeWidth="1.500" vectorEffect="non-scaling-stroke" />
      <Strokes list={rightStrokes} />
      <Bubbles at={[[198, 375], [478, 447], [758, 517]]} rx={25} ry={13} />
    </g>
    {bays.map(([x, y, turn]) => (
      <text
        key={x}
        transform={`translate(${x} ${y}) rotate(${turn})`}
        y="8"
        textAnchor="middle"
        fontSize="22"
        fill="#d08a1a"
        className="font-['Liberation_Sans',sans-serif] font-bold"
      >
        E
      </text>
    ))}
  </svg>
);

const App = () => {
  return (
    <div className="flex h-screen flex-col overflow-hidden bg-[#f7f7f7] font-['Noto_Sans','Noto_Sans_CJK_SC',sans-serif] text-[#333]">
      <TopBar />
      <main className="flex min-h-0 flex-1">
        <Navigator />
        <div className="relative ml-[7px] flex w-[508px] shrink-0 flex-col">
          <ComponentPanel />
          <PropertyPanel />
          <svg viewBox="0 0 180 14" className="absolute top-[926px] left-[203px] h-3.5 w-[180px]" fill="none" stroke="#ff2010" strokeWidth="5">
            <path d="M2 3h93l30 4 15 3h35" strokeLinejoin="round" />
          </svg>
        </div>
        <div className="flex w-1.5 shrink-0 flex-col bg-[#f0f0f0] pt-[540px]">
          <div className="flex h-[150px] items-center bg-[#555e69]">
            <svg viewBox="0 0 6 8" className="h-2 w-1.5" fill="#c9c9c9">
              <path d="M6 0v8L1 4z" />
            </svg>
          </div>
        </div>
        <div className="relative min-w-0 flex-1 bg-black">
          <Drawing />
          <div className="absolute top-0 right-0 h-[340px] w-[5px] bg-white" />
          <ReportDialog />
        </div>
      </main>
    </div>
  );
};

export default App;
